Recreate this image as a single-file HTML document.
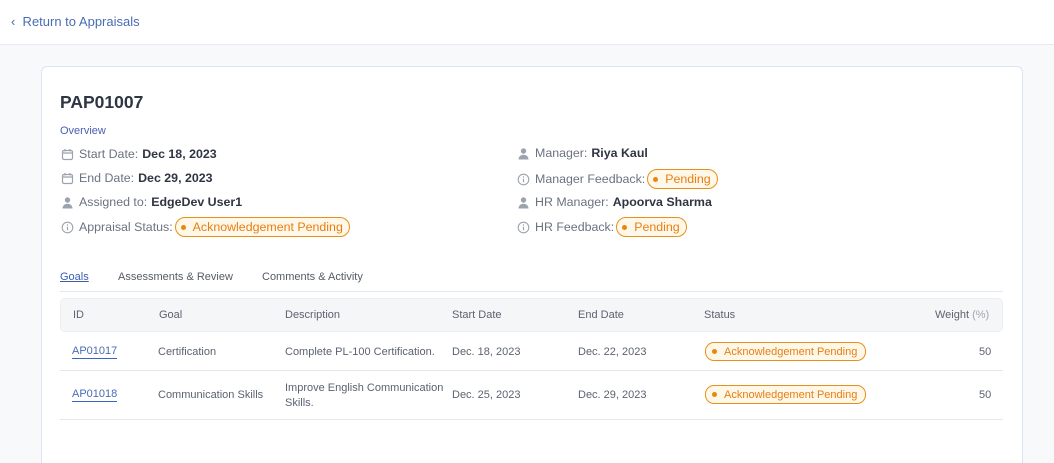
<!DOCTYPE html>
<html><head><style>
*{box-sizing:border-box;margin:0;padding:0}
html,body{width:1054px;height:463px;overflow:hidden}
body{background:#f8f9fb;font-family:"Liberation Sans",sans-serif;color:#4b5563;position:relative}
.hdr{position:absolute;left:0;top:0;width:1054px;height:45px;background:#fff;border-bottom:1px solid #e8ebf0}
.back{position:absolute;left:11px;top:14px;font-size:13px;color:#4a6cb3}
.card{position:absolute;left:41px;top:66px;width:982px;height:397px;background:#fff;border:1px solid #dbe4f0;border-bottom:none;border-radius:6px 6px 0 0}
.a{position:absolute;white-space:nowrap}
h1{position:absolute;left:60px;top:92px;font-size:17.5px;font-weight:bold;color:#2f3542}
.ov{left:60px;top:125px;font-size:11px;color:#4a5fb3}
.f{font-size:12.4px;color:#6b7280;display:flex;align-items:center}
.f b{color:#2f3542;font-weight:bold;margin-left:4px}
.ic{width:13px;height:13px;margin-right:5px;display:inline-block}
.pill{display:inline-flex;align-items:center;border:1px solid #e8901c;background:#fff8e8;color:#e67e14;border-radius:10px;height:20px;padding:0 6px 0 5px;margin-left:2px;font-size:12.4px}
.pill:before{content:"";width:5px;height:5px;border-radius:50%;background:#e8870f;margin-right:7px}
.tabs{font-size:11px;color:#555b66;top:271px}
.tline{position:absolute;left:60px;top:291px;width:943px;height:1px;background:#e5e7eb}
.th{position:absolute;left:60px;top:298px;width:943px;height:34px;background:#f5f6f8;border:1px solid #eceef2;border-radius:5px}
.c{position:absolute;font-size:11px;color:#5b6270;white-space:nowrap}
.rl{position:absolute;left:60px;width:943px;height:1px;background:#e5e7eb}
.id{color:#4a6cb3;border-bottom:1px solid #3b63c4;padding-bottom:1px}
.sp{position:absolute;display:inline-flex;align-items:center;border:1px solid #e8901c;background:#fff8e8;color:#e67e14;border-radius:9px;height:19px;padding:0 8px 0 6px;font-size:11px}
.sp:before{content:"";width:5px;height:5px;border-radius:50%;background:#e8870f;margin-right:7px}
</style></head><body>
<div class="hdr"><div class="back">‹&nbsp; Return to Appraisals</div></div>
<div class="card"></div>
<h1>PAP01007</h1>
<div class="a ov">Overview</div>
<svg width="0" height="0" style="position:absolute"><defs>
<symbol id="cal" viewBox="0 0 13 13"><rect x="1.5" y="2.5" width="10" height="9" rx="1.5" fill="none" stroke="#9ca3af" stroke-width="1.2"/><path d="M1.5 5h10M4 1v2.5M9 1v2.5" stroke="#9ca3af" stroke-width="1.2"/></symbol>
<symbol id="usr" viewBox="0 0 13 13"><circle cx="6.5" cy="4" r="2.7" fill="#9ca3af"/><path d="M1.5 12.5c0-3 2.2-4.8 5-4.8s5 1.8 5 4.8z" fill="#9ca3af"/></symbol>
<symbol id="inf" viewBox="0 0 13 13"><circle cx="6.5" cy="6.5" r="5.3" fill="none" stroke="#9ca3af" stroke-width="1.1"/><path d="M6.5 5.8v3.5" stroke="#9ca3af" stroke-width="1.2"/><circle cx="6.5" cy="4" r=".7" fill="#9ca3af"/></symbol>
</defs></svg>
<div class="a f" style="left:61px;top:147px"><svg class="ic"><use href="#cal"/></svg>Start Date:<b>Dec 18, 2023</b></div>
<div class="a f" style="left:61px;top:171px"><svg class="ic"><use href="#cal"/></svg>End Date:<b>Dec 29, 2023</b></div>
<div class="a f" style="left:61px;top:195px"><svg class="ic"><use href="#usr"/></svg>Assigned to:<b>EdgeDev User1</b></div>
<div class="a f" style="left:61px;top:217px"><svg class="ic"><use href="#inf"/></svg>Appraisal Status:<span class="pill">Acknowledgement Pending</span></div>
<div class="a f" style="left:517px;top:146px"><svg class="ic"><use href="#usr"/></svg>Manager:<b>Riya Kaul</b></div>
<div class="a f" style="left:517px;top:169px"><svg class="ic"><use href="#inf"/></svg>Manager Feedback:<span class="pill">Pending</span></div>
<div class="a f" style="left:517px;top:195px"><svg class="ic"><use href="#usr"/></svg>HR Manager:<b>Apoorva Sharma</b></div>
<div class="a f" style="left:517px;top:217px"><svg class="ic"><use href="#inf"/></svg>HR Feedback:<span class="pill">Pending</span></div>
<div class="a tabs" style="left:60px;color:#3b5bb3;text-decoration:underline">Goals</div>
<div class="a tabs" style="left:118px">Assessments &amp; Review</div>
<div class="a tabs" style="left:262px">Comments &amp; Activity</div>
<div class="tline"></div>
<div class="th"></div>
<div class="c" style="left:73px;top:309px">ID</div>
<div class="c" style="left:159px;top:309px">Goal</div>
<div class="c" style="left:285px;top:309px">Description</div>
<div class="c" style="left:452px;top:309px">Start Date</div>
<div class="c" style="left:578px;top:309px">End Date</div>
<div class="c" style="left:704px;top:309px">Status</div>
<div class="c" style="left:935px;top:309px">Weight <span style="color:#a0a6b0">(%)</span></div>
<div class="c" style="left:72px;top:345px"><span class="id">AP01017</span></div>
<div class="c" style="left:158px;top:346px">Certification</div>
<div class="c" style="left:285px;top:346px">Complete PL-100 Certification.</div>
<div class="c" style="left:452px;top:346px">Dec. 18, 2023</div>
<div class="c" style="left:578px;top:346px">Dec. 22, 2023</div>
<div class="sp" style="left:705px;top:342px">Acknowledgement Pending</div>
<div class="c" style="left:979px;top:346px">50</div>
<div class="rl" style="top:370px"></div>
<div class="c" style="left:72px;top:388px"><span class="id">AP01018</span></div>
<div class="c" style="left:158px;top:389px">Communication Skills</div>
<div class="c" style="left:285px;top:381px;line-height:15px">Improve English Communication<br>Skills.</div>
<div class="c" style="left:452px;top:389px">Dec. 25, 2023</div>
<div class="c" style="left:578px;top:389px">Dec. 29, 2023</div>
<div class="sp" style="left:705px;top:385px">Acknowledgement Pending</div>
<div class="c" style="left:979px;top:389px">50</div>
<div class="rl" style="top:419px"></div>
</body></html>
